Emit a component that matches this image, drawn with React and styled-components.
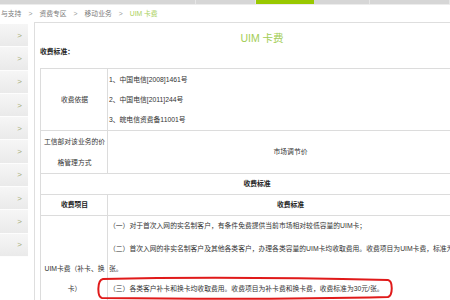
import React from 'react';
import styled, { createGlobalStyle } from 'styled-components';

const Global = createGlobalStyle`
  html, body {
    margin: 0;
    padding: 0;
    background: #fff;
    overflow: hidden;
  }
  body {
    width: 450px;
    height: 300px;
    font-family: "Liberation Sans", "Noto Sans CJK SC", sans-serif;
    font-size: 6.8px;
    color: #333;
  }
`

const Page = styled.div`
  width: 450px;
  height: 300px;
  overflow: hidden;
  display: flex;
  flex-direction: column;
`

const TabStrip = styled.div`
  height: 4px;
  flex-shrink: 0;
  display: flex;
  background: #d6d6d6;
  border-bottom: 1px solid #ececec;
`

const Tab = styled.div`
  width: ${p => p.w}px;
  height: 100%;
  background: ${p => (p.active ? '#99c800' : 'transparent')};
  border-right: 1px solid ${p => (p.active ? '#99c800' : '#e6e6e6')};
`

const Crumbs = styled.div`
  height: 17px;
  flex-shrink: 0;
  display: flex;
  align-items: center;
  gap: 5px;
  padding-left: 1px;
  color: #7a7a7a;
  white-space: nowrap;
  line-height: 20px;
`

const Crumb = styled.span`
  color: ${p => (p.current ? '#a9d05a' : '#7a7a7a')};
`

const Sep = styled.span`
  color: #999;
  padding: 0 2px;
`

const Body = styled.div`
  display: flex;
  gap: 6px;
  flex: 1;
`

const Sidebar = styled.div`
  width: 28px;
  flex-shrink: 0;
  padding-top: 2px;
  display: flex;
  flex-direction: column;
`

const SideItem = styled.div`
  height: 22.3px;
  border-bottom: 1px solid #fdfdfd;
  background: linear-gradient(#f6f6f6, #eaeaea);
  display: flex;
  align-items: center;
  justify-content: flex-end;
  padding-right: 6px;
  color: #a3ab78;
  font-size: 8px;
`

const Main = styled.div`
  width: 444px;
  flex-shrink: 0;
  border-top: 1px solid #dedede;
  border-left: 1px solid #dedede;
  padding-left: 5px;
  padding-right: 6px;
`

const Title = styled.div`
  margin-top: 7px;
  line-height: 16px;
  text-align: center;
  color: #a3cd55;
  font-size: 10.5px;
`

const Label = styled.div`
  line-height: 12px;
  font-weight: bold;
  color: #222;
`

const Table = styled.table`
  margin-top: 10px;
  width: 433px;
  border-collapse: collapse;
  table-layout: fixed;
`

const Row = styled.tr`
  height: ${p => p.h}px;
`

const Cell = styled.td`
  border: 1px solid #dcdcdc;
  padding: 0 0 0 1px;
  text-align: ${p => p.align || 'left'};
  vertical-align: ${p => p.valign || 'middle'};
  font-weight: ${p => (p.bold ? 'bold' : 'normal')};
  color: ${p => (p.bold ? '#222' : '#333')};
  white-space: nowrap;
  line-height: ${p => p.lh || 20}px;
  padding-top: ${p => p.pt || 0}px;
`

const Line = styled.div`
  white-space: nowrap;
  line-height: ${p => p.lh || 20}px;
  margin-top: ${p => p.mt || 0}px;
`

const Marked = styled.div`
  position: relative;
  white-space: nowrap;
  line-height: 20px;
`

const Circle = styled.svg`
  position: absolute;
  left: -13px;
  top: -2px;
  overflow: visible;
`

const tabs = [
  { w: 197 },
  { w: 59 },
  { w: 58, active: true },
  { w: 55 },
  { w: 80 },
]

const App = () => {
  return (
    <Page>
      <Global />
      <TabStrip>
        {tabs.map((t, i) => (
          <Tab key={i} w={t.w} active={t.active} />
        ))}
      </TabStrip>
      <Crumbs>
        <Crumb>与支持</Crumb>
        <Sep>&gt;</Sep>
        <Crumb>资费专区</Crumb>
        <Sep>&gt;</Sep>
        <Crumb>移动业务</Crumb>
        <Sep>&gt;</Sep>
        <Crumb current>UIM 卡费</Crumb>
      </Crumbs>
      <Body>
        <Sidebar>
          {Array.from({ length: 10 }).map((_, i) => (
            <SideItem key={i}>&gt;</SideItem>
          ))}
        </Sidebar>
        <Main>
          <Title>UIM 卡费</Title>
          <Label>收费标准：</Label>
          <Table>
            <colgroup>
              <col style={{ width: 67 }} />
              <col />
            </colgroup>
            <tbody>
              <Row h={62}>
                <Cell align="center">收费依据</Cell>
                <Cell>
                  <Line>1、中国电信[2008]1461号</Line>
                  <Line>2、中国电信[2011]244号</Line>
                  <Line>3、皖电信资费备11001号</Line>
                </Cell>
              </Row>
              <Row h={42}>
                <Cell align="center">
                  <Line lh={21}>工信部对该业务的价</Line>
                  <Line lh={21}>格管理方式</Line>
                </Cell>
                <Cell align="center">市场调节价</Cell>
              </Row>
              <Row h={21}>
                <Cell colSpan={2} align="center" bold>收费标准</Cell>
              </Row>
              <Row h={21}>
                <Cell align="center" bold>收费项目</Cell>
                <Cell align="center" bold>收费标准</Cell>
              </Row>
              <Row h={100}>
                <Cell align="center" valign="top" pt={43}>
                  <Line>UIM卡费（补卡、换</Line>
                  <Line>卡）</Line>
                </Cell>
                <Cell valign="top">
                  <Line>（一）对于首次入网的实名制客户，有条件免费提供当前市场相对较低容量的UIM卡；</Line>
                  <Line mt={3}>（二）首次入网的非实名制客户及其他各类客户，办理各类容量的UIM卡均收取费用。收费项目为UIM卡费，标准为20元/</Line>
                  <Line>张。</Line>
                  <Marked>
                    （三）各类客户补卡和换卡均收取费用。收费项目为补卡费和换卡费，收费标准为30元/张。
                    <Circle width="298" height="22" viewBox="0 0 298 22">
                      <path
                        d="M7,2 C90,0 210,1 292,3 C297,4 297,18 292,20 C210,22 90,22 6,21 C1,20 1,3 7,2 Z"
                        fill="none"
                        stroke="#e01a1a"
                        strokeWidth="2"
                      />
                    </Circle>
                  </Marked>
                </Cell>
              </Row>
            </tbody>
          </Table>
        </Main>
      </Body>
    </Page>
  );
};

export default App;
